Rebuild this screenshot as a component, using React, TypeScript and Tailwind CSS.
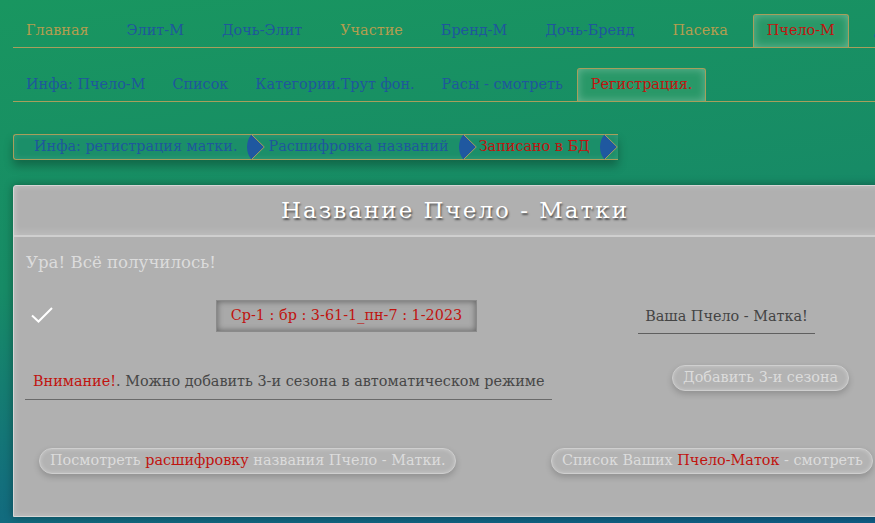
import React from 'react';

const GOLD = '#a89e5c';

type Tab = { label: string; tone: 'gold' | 'blue'; active?: boolean };

const mainTabs: Tab[] = [
  { label: 'Главная', tone: 'gold' },
  { label: 'Элит-М', tone: 'blue' },
  { label: 'Дочь-Элит', tone: 'blue' },
  { label: 'Участие', tone: 'gold' },
  { label: 'Бренд-М', tone: 'blue' },
  { label: 'Дочь-Бренд', tone: 'blue' },
  { label: 'Пасека', tone: 'gold' },
  { label: 'Пчело-М', tone: 'blue', active: true },
  { label: 'Дочь-Пчело', tone: 'blue' },
];

const subTabs: Tab[] = [
  { label: 'Инфа: Пчело-М', tone: 'blue' },
  { label: 'Список', tone: 'blue' },
  { label: 'Категории.Трут фон.', tone: 'blue' },
  { label: 'Расы - смотреть', tone: 'blue' },
  { label: 'Регистрация.', tone: 'blue', active: true },
];

const TabRow = ({ tabs, className }: { tabs: Tab[]; className: string }) => (
  <nav className={`flex h-[34px] ml-[13px] mr-[13px] border-b border-[#a89e5c] whitespace-nowrap ${className}`}>
    {tabs.map((t) =>
      t.active ? (
        <span
          key={t.label}
          className="flex items-center px-[13px] text-[14.4px] text-[#c0140f] bg-[#299868] border border-b-0 border-[#a89e5c] rounded-t-[3px] shadow-[inset_0_0_8px_rgba(255,255,255,0.3)]"
        >
          {t.label}
        </span>
      ) : (
        <span
          key={t.label}
          className={`flex items-center px-[13px] text-[14.4px] ${t.tone === 'gold' ? 'text-[#b49d4f]' : 'text-[#1f579c]'}`}
        >
          {t.label}
        </span>
      )
    )}
  </nav>
);

// blue half-round chevron used as a breadcrumb separator
const Chevron = () => (
  <svg width="18" height="26" viewBox="0 0 18 26" className="-my-px shrink-0">
    <path d="M4.5 0.5 L17.3 13 L4.5 25.5 C-1.5 19 -1.5 7 4.5 0.5 Z" fill="#1f58a0" />
    <path d="M4.5 0.5 L17.3 13 L4.5 25.5" fill="none" stroke={GOLD} strokeWidth="1" />
  </svg>
);

const Pill = ({ children, className = '' }: { children: React.ReactNode; className?: string }) => (
  <button
    className={`h-[26px] px-[10px] rounded-full border border-[#cfcfcf] bg-[#b3b3b3] text-[14.4px] text-[#dcdcdc] whitespace-nowrap shadow-[0_3px_6px_rgba(0,0,0,0.18),inset_0_0_4px_rgba(255,255,255,0.35)] ${className}`}
  >
    {children}
  </button>
);

export default function App() {
  return (
    <div className="w-full h-[523px] overflow-hidden font-['DejaVu_Serif',serif] bg-[linear-gradient(172deg,#199660_0%,#178b66_45%,#136f7c_75%,#0f5d86_100%)]">
      <div className="w-[910px] pt-[14px]">
        <TabRow tabs={mainTabs} className="gap-3" />
        <TabRow tabs={subTabs} className="mt-[20px] gap-px" />

        {/* breadcrumbs */}
        <div className="mt-[32px] ml-[13px] flex">
          <div className="flex items-center h-[26px] pl-[20px] border-y border-l border-[#a89e5c] rounded-l-[3px] bg-[#1b8f69] shadow-[0_6px_10px_rgba(0,0,0,0.28),inset_0_0_6px_rgba(255,255,255,0.12)] text-[14.4px] whitespace-nowrap">
            <span className="text-[#1f579c]">Инфа: регистрация матки.</span>
            <span className="ml-[10px] flex"><Chevron /></span>
            <span className="ml-[3px] text-[#1f579c]">Расшифровка названий</span>
            <span className="ml-[10px] flex"><Chevron /></span>
            <span className="ml-[2px] text-[#c0140f]">Записано в БД</span>
            <span className="ml-[10px] flex"><Chevron /></span>
          </div>
        </div>

        {/* main panel */}
        <section className="mt-[25px] ml-[13px] w-[884px] h-[332px] bg-[#b0b0b0] border border-[#d6d6d6] rounded-tl-[3px] shadow-[0_0_8px_rgba(0,0,0,0.35),inset_0_0_6px_rgba(255,255,255,0.25)]">
          <header className="h-[51px] flex items-center justify-center border-b-2 border-[#cfcfcf] shadow-[inset_0_-4px_6px_rgba(255,255,255,0.15)]">
            <h1 className="text-[23px] tracking-[2px] text-white [text-shadow:1px_2px_2px_rgba(0,0,0,0.55)]">
              Название Пчело - Матки
            </h1>
          </header>

          <div className="pt-[14px]">
            <p className="ml-[12px] h-[24px] leading-[24px] text-[16.6px] text-[#dcdcdc]">Ура! Всё получилось!</p>

            <div className="mt-[25px] flex items-start">
              <svg width="22" height="16" viewBox="0 0 22 16" className="ml-[17px] mt-[7px]">
                <polyline points="1,8.5 7.5,14.5 21,1" fill="none" stroke="#ffffff" strokeWidth="2" />
              </svg>
              <div className="ml-[163px] w-[261px] h-[32px] flex items-center justify-center bg-[#a9a9a9] border border-[#8a8a8a] shadow-[inset_0_0_6px_rgba(0,0,0,0.45)] text-[14.4px] text-[#c0140f] whitespace-nowrap">
                Ср-1 : бр : 3-61-1_пн-7 : 1-2023
              </div>
              <div className="ml-[161px] w-[177px] h-[34px] flex items-center justify-center border-b border-[#5f5f5f] text-[14.4px] text-[#444444] whitespace-nowrap">
                Ваша Пчело - Матка!
              </div>
            </div>

            <div className="mt-[31px] flex items-start">
              <div className="ml-[11px] w-[527px] h-[35px] pl-[8px] pt-[4px] border-b border-[#6a6a6a] text-[14.4px] leading-[24px] text-[#474747] whitespace-nowrap">
                <span className="text-[#c0140f]">Внимание!</span>. Можно добавить 3-и сезона в автоматическом режиме
              </div>
              <Pill className="ml-[120px] w-[177px]">Добавить 3-и сезона</Pill>
            </div>

            <div className="mt-[48px] flex items-start">
              <Pill className="ml-[25px] w-[417px]">
                Посмотреть <span className="text-[#c0140f]">расшифровку</span> названия Пчело - Матки.
              </Pill>
              <Pill className="ml-[95px] w-[322px]">
                Список Ваших <span className="text-[#c0140f]">Пчело-Маток</span> - смотреть
              </Pill>
            </div>
          </div>
        </section>
      </div>
    </div>
  );
}
